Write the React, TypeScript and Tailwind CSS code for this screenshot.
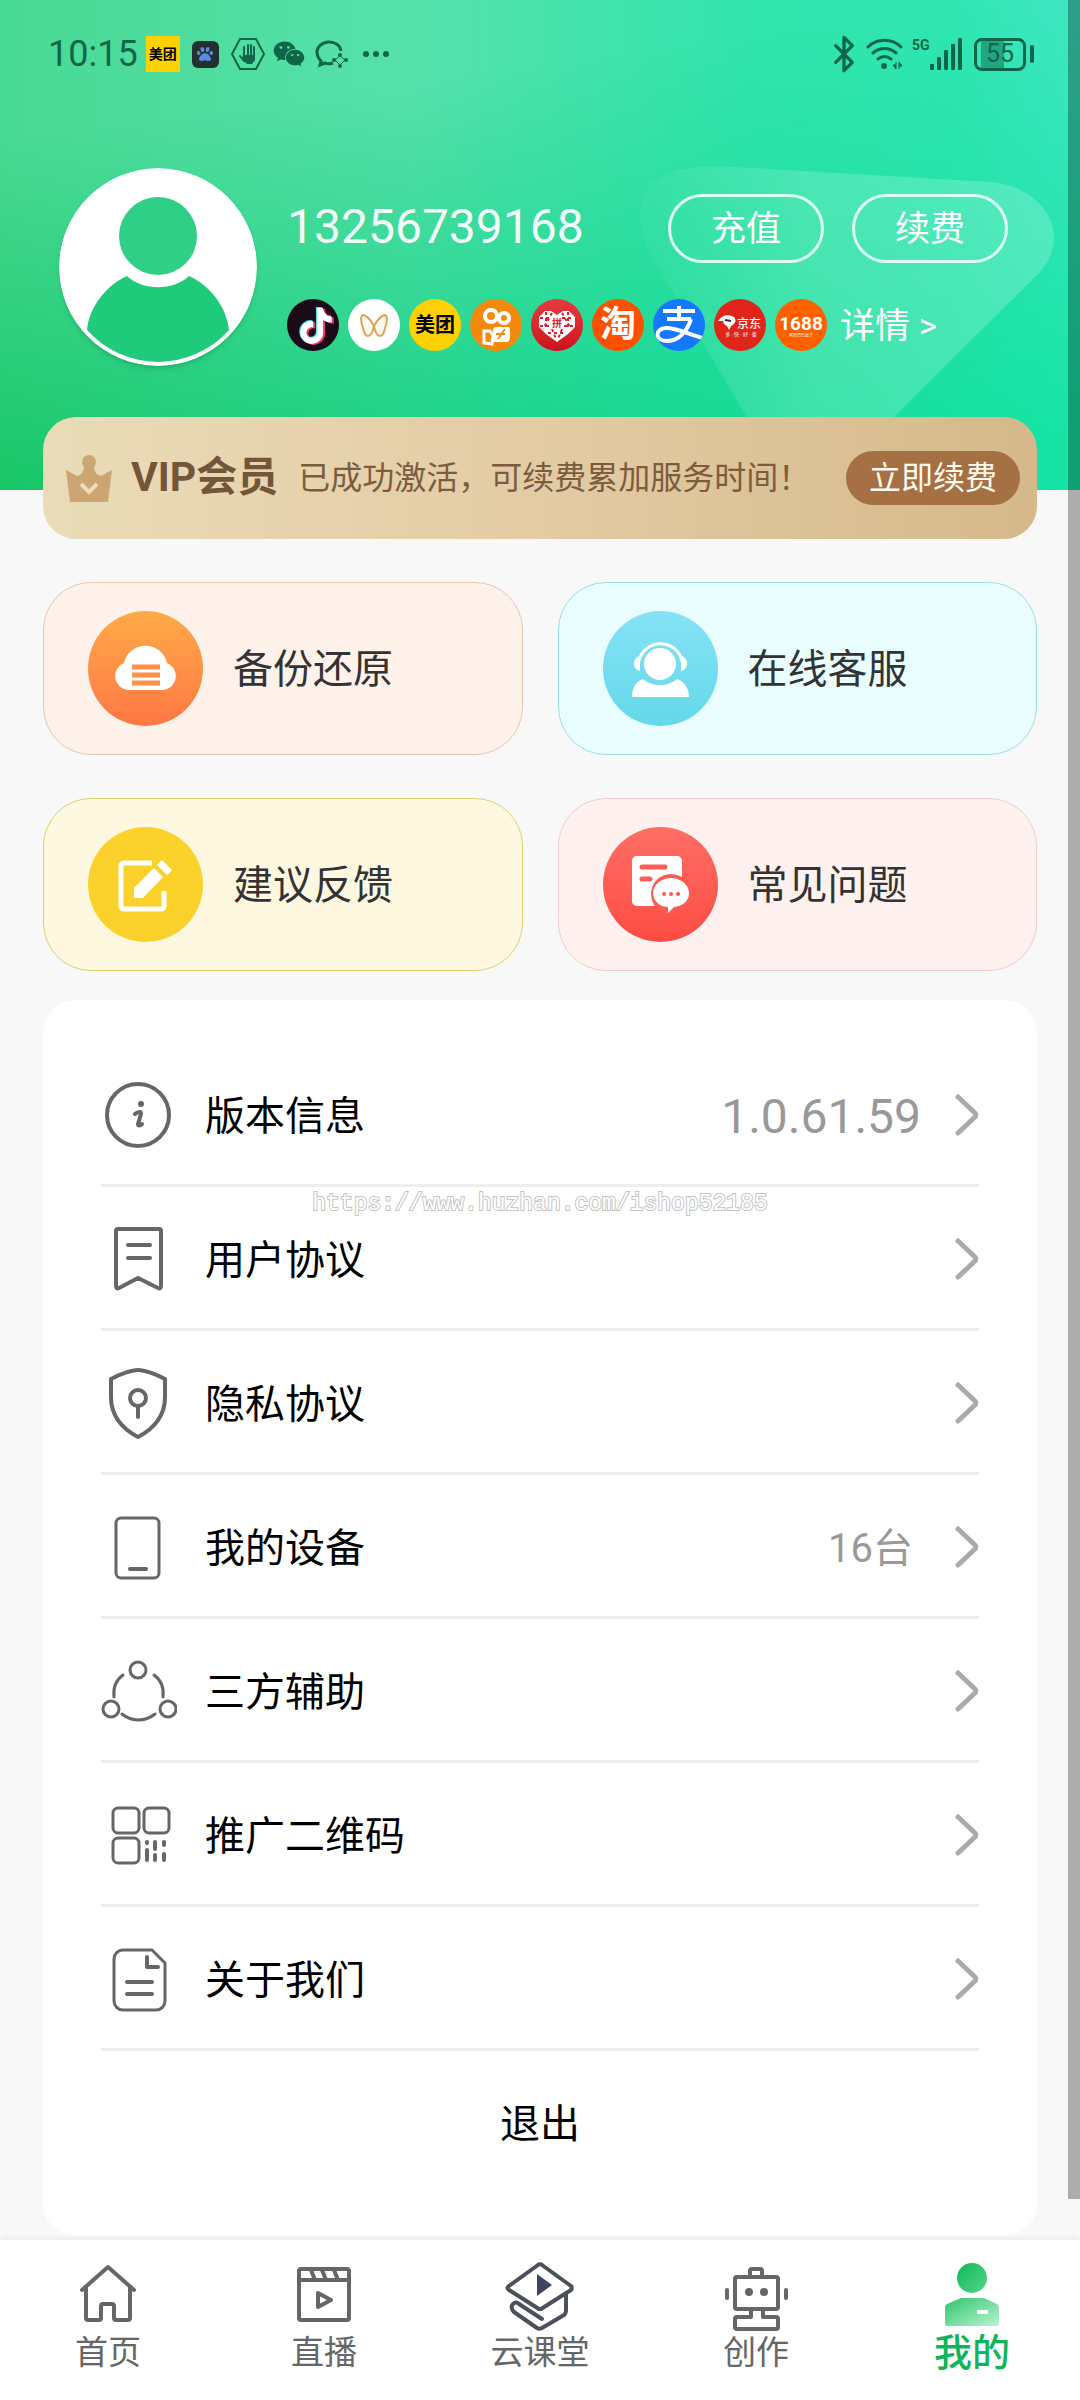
import type { ReactNode } from "react";
import { Bluetooth } from "lucide-react";
import { FaPaw, FaTiktok, FaWeixin } from "react-icons/fa";

const VersionIcon = () => (
  <>
    <circle cx="37" cy="38" r="31" />
    <circle cx="40" cy="27" r="3" stroke="none" fill="#666" />
    <path d="M34 37c2-2 4-2 5-2 1 0 1 1 1 2l-3 10c0 2 2 2 4 0" strokeWidth="4" />
  </>
);

const UserAgreementIcon = () => (
  <>
    <path d="M17 8h41a2 2 0 0 1 2 2v55c0 2-1 3-3 2L37 57 18 67c-2 1-3 0-3-2V10a2 2 0 0 1 2-2Z" />
    <path d="M27 24h22M27 37h22" />
  </>
);

const PrivacyIcon = () => (
  <>
    <path d="M37 5c6 0 18 4 27 9v18c0 18-10 31-27 40C20 63 10 50 10 32V14c9-5 21-9 27-9Z" />
    <circle cx="37" cy="33" r="8" />
    <path d="M37 41v11" />
  </>
);

const DeviceIcon = () => (
  <>
    <rect x="15" y="9" width="43" height="60" rx="5" strokeWidth="3" />
    <path d="M29 60h16" />
  </>
);

const AssistIcon = () => (
  <g strokeWidth="3">
    <circle cx="37" cy="17" r="8" />
    <circle cx="10" cy="56" r="8" />
    <circle cx="67" cy="56" r="8" />
    <path d="M22 22c-7 5-10 13-9 22M53 22c7 5 10 13 9 22M21 61c10 8 23 8 33 0" />
  </g>
);

const QrIcon = () => (
  <g strokeWidth="3">
    <rect x="12" y="11" width="26" height="25" rx="5" />
    <rect x="43" y="11" width="25" height="25" rx="5" />
    <rect x="12" y="41" width="26" height="25" rx="5" />
    <path d="M46 45v1M46 53v10M54 45v7M54 58v5M63 45v3M63 57v6" strokeWidth="4" />
  </g>
);

const AboutIcon = () => (
  <>
    <path d="M22 9h29l13 13v38a9 9 0 0 1-9 9H22a9 9 0 0 1-9-9V18a9 9 0 0 1 9-9Z" strokeWidth="3" />
    <path d="M46 16v10h11M26 41h25M26 53h25" />
  </>
);

const menuItems = [
  { label: "版本信息", icon: VersionIcon, value: "1.0.61.59", valueClass: "text-5xl mr-[34px]" },
  { label: "用户协议", icon: UserAgreementIcon },
  { label: "隐私协议", icon: PrivacyIcon },
  { label: "我的设备", icon: DeviceIcon, value: "16台", valueClass: "text-[40px] mr-[42px]" },
  { label: "三方辅助", icon: AssistIcon },
  { label: "推广二维码", icon: QrIcon },
  { label: "关于我们", icon: AboutIcon },
];

const BackupIcon = () => (
  <>
    <path fill="#fff" d="M40 79a14 14 0 0 1-4-27 22 22 0 0 1 43 0 14 14 0 0 1-4 27Z" />
    <path stroke="#ff914a" strokeWidth="5" d="M44 56h28M44 64h28M44 72h28" />
  </>
);

const SupportIcon = () => (
  <>
    <circle cx="57" cy="53" r="16" fill="#fff" />
    <path d="M36 50a22 22 0 0 1 43 0" fill="none" stroke="#fff" strokeWidth="3" />
    <path d="M37 45c-8 1-8 14 0 15ZM78 45c8 1 8 14 0 15Z" fill="#fff" />
    <path d="M40 68c9 8 25 8 34 0 7 2 12 9 12 18H29c0-9 4-16 11-18Z" fill="#fff" />
  </>
);

const FeedbackIcon = () => (
  <>
    <path
      d="M64 36H36a3 3 0 0 0-3 3v40a3 3 0 0 0 3 3h37a3 3 0 0 0 3-3V64"
      fill="none"
      stroke="#fff"
      strokeWidth="5"
    />
    <path d="M46 71V61l20-20 9 9-20 21ZM69 38l5-5 10 10-5 5Z" fill="#fff" />
  </>
);

const FaqIcon = () => (
  <>
    <path d="M34 29h40a5 5 0 0 1 5 5v45H34a5 5 0 0 1-5-5V34a5 5 0 0 1 5-5Z" fill="#fff" />
    <path d="M39 40h23M39 52h8" stroke="#fd5e55" strokeWidth="5" strokeLinecap="round" />
    <circle cx="68" cy="67" r="20" fill="#fd5b52" />
    <path d="M68 51c10 0 18 7 18 15 0 9-7 13-15 14l-6 6v-6c-8 0-15-6-15-14 0-8 8-15 18-15Z" fill="#fff" />
    <path d="M61 67h.1M68 67h.1M75 67h.1" stroke="#fd5b52" strokeWidth="4" strokeLinecap="round" />
  </>
);

const shortcuts = [
  {
    label: "备份还原",
    icon: BackupIcon,
    card: "border-[#e9c4ae] bg-[#fff2ea]",
    disc: "bg-linear-to-b from-[#ffaa48] to-[#ff7744]",
  },
  {
    label: "在线客服",
    icon: SupportIcon,
    card: "border-[#9adfe4] bg-[#eafdff]",
    disc: "bg-linear-to-b from-[#86e2f7] to-[#62d9e9]",
  },
  {
    label: "建议反馈",
    icon: FeedbackIcon,
    card: "border-[#d9d26a] bg-[#fef8e1]",
    disc: "bg-[#fbd22b]",
  },
  {
    label: "常见问题",
    icon: FaqIcon,
    card: "border-[#f2cccc] bg-[#fef1ef]",
    disc: "bg-linear-to-b from-[#ff6e66] to-[#fc4b42]",
  },
];

const platforms: { name: string; bg: string; logo: ReactNode }[] = [
  {
    name: "抖音",
    bg: "bg-[#1b0a18]",
    logo: (
      <svg viewBox="0 0 52 52" className="size-full">
        <FaTiktok x="10" y="8" size="36" color="#3ee6e6" />
        <FaTiktok x="13" y="10" size="36" color="#f0366a" />
        <FaTiktok x="11" y="9" size="36" color="#fff" />
      </svg>
    ),
  },
  {
    name: "视频号",
    bg: "bg-white",
    logo: (
      <svg viewBox="0 0 52 52" className="size-full" fill="#fffaf0" stroke="#dba559" strokeWidth="2">
        <path d="M26 27C23 21 18 16 15 16c-3 1-2 8 0 13 1 5 3 8 5 8 3 0 5-5 6-10Z" />
        <path d="M26 27c3-6 8-11 11-11 3 1 2 8 0 13-1 5-3 8-5 8-3 0-5-5-6-10Z" />
      </svg>
    ),
  },
  {
    name: "美团",
    bg: "bg-[#ffd100]",
    logo: <span className="text-xl font-bold text-black">美团</span>,
  },
  {
    name: "快手",
    bg: "bg-[#f48a0c]",
    logo: (
      <svg viewBox="0 0 52 52" className="size-full" fill="none" stroke="#fff" strokeWidth="4">
        <circle cx="21" cy="17" r="6" />
        <circle cx="34" cy="19" r="5" />
        <path d="M26 28h12a2 2 0 0 1 2 2v9a4 4 0 0 1-4 4H24l-1-12a3 3 0 0 1 3-3Z" fill="#fff" stroke="none" />
        <path d="M14 32v12l8 1 1-9-3-4Z" strokeWidth="3" />
        <path d="M26 35h9M35 30l-7 10" stroke="#f48a0c" strokeWidth="2" />
      </svg>
    ),
  },
  {
    name: "拼多多",
    bg: "bg-linear-to-b from-[#e53a3f] to-[#cf0f1c]",
    logo: (
      <svg viewBox="0 0 52 52" className="size-full">
        <path d="M26 16l6-4h6l6 6v10l-7 7-11 8-11-8-7-7V18l6-6h6Z" fill="#fff" />
        <path
          d="M9 19h12M31 19h12M9 27h10M33 27h10M15 13v18M37 13v18M21 14l-9 16M31 14l9 16M17 34h18M21 30l4 10M31 30l-4 10"
          stroke="#d9202b"
          strokeWidth="2"
          strokeDasharray="3 3"
        />
        <path d="M26 16l8 8-8 8-8-8Z" fill="#fff" />
        <text x="26" y="28" textAnchor="middle" className="fill-[#df2631] text-[10px] font-bold">
          拼
        </text>
      </svg>
    ),
  },
  {
    name: "淘宝",
    bg: "bg-[#ff5000]",
    logo: <span className="text-[36px] font-bold text-white">淘</span>,
  },
  {
    name: "支付宝",
    bg: "bg-[#1677ff]",
    logo: (
      <svg viewBox="0 0 52 52" className="size-full" fill="none" stroke="#fff" strokeWidth="4">
        <path d="M26 7v12M10 12h32M14 20h24" />
        <path d="M38 20c-4 12-12 22-24 22-13 0-12-13-1-13 12 0 21 6 37 10" />
      </svg>
    ),
  },
  {
    name: "京东",
    bg: "bg-[#e1251b]",
    logo: (
      <svg viewBox="0 0 52 52" className="size-full">
        <path d="M4 22c4-6 10-7 16-4 3 3 1 7-3 9l-2 4-2-4c-3-1-4-4-4-5Z" fill="#fff" />
        <path d="M11 21l6 1" stroke="#333" strokeWidth="2" />
        <text x="23" y="29" className="fill-white text-[12px] font-medium">
          京东
        </text>
        <text x="27" y="37" textAnchor="middle" className="fill-white text-[5px]">
          多 · 快 · 好 · 省
        </text>
      </svg>
    ),
  },
  {
    name: "1688",
    bg: "bg-[#ff6000]",
    logo: (
      <svg viewBox="0 0 52 52" className="size-full">
        <text x="26" y="31" textAnchor="middle" className="fill-white text-[19px] font-bold">
          1688
        </text>
        <text x="26" y="38" textAnchor="middle" className="fill-white text-[4px]">
          阿里巴巴旗下
        </text>
      </svg>
    ),
  },
];

const HomeIcon = () => (
  <>
    <path d="M10 28 36 5l26 23" />
    <path d="M14 25v31a2 2 0 0 0 2 2h11a2 2 0 0 0 2-2V44a2 2 0 0 1 2-2h9a2 2 0 0 1 2 2v12a2 2 0 0 0 2 2h12a2 2 0 0 0 2-2V25" />
  </>
);

const LiveIcon = () => (
  <>
    <rect x="11" y="7" width="50" height="51" rx="2" />
    <path d="M11 18h50M23 8l4 10M34 8l4 10M46 8l4 10" />
    <path d="M30 31v14l13-7Z" />
  </>
);

const CourseIcon = () => (
  <g stroke="#4c505b">
    <path d="M34 3c1-1 3-1 4 0l29 21c1 1 1 3 0 4L37 47h-2L5 28c-2-1-2-3 0-4Z" />
    <path d="M62 32v17c0 2-1 3-2 4L38 66c-2 1-3 1-5 0L10 50c-3-3-3-6-1-8s4-2 6 0l23 15" />
    <path d="M33 12v22l15-11Z" fill="#3e4562" stroke="none" />
  </g>
);

const CreateIcon = () => (
  <>
    <path d="M30 14V9a2 2 0 0 1 2-2h8a2 2 0 0 1 2 2v5" />
    <rect x="15" y="15" width="43" height="32" rx="2" />
    <circle cx="29" cy="30" r="4" fill="#666" stroke="none" />
    <circle cx="44" cy="30" r="4" fill="#666" stroke="none" />
    <path d="M7 28v8M66 28v8" />
    <path d="M31 47v8H17a2 2 0 0 0-2 2v8a2 2 0 0 0 2 2h39a2 2 0 0 0 2-2v-8a2 2 0 0 0-2-2H43v-8" />
  </>
);

const MineIcon = () => (
  <g stroke="none">
    <defs>
      <linearGradient id="mine" x1="0" y1="0" x2="1" y2="1">
        <stop offset="0" stopColor="#0fb854" />
        <stop offset="1" stopColor="#57d68c" />
      </linearGradient>
      <linearGradient id="mine-body" x1="0" y1="0" x2="1" y2="1">
        <stop offset="0" stopColor="#2fc56d" />
        <stop offset="1" stopColor="#b9f3d2" />
      </linearGradient>
    </defs>
    <circle cx="36" cy="16" r="15" fill="url(#mine)" />
    <path d="M25 36h23l13 6c1 1 2 2 2 4v16a2 2 0 0 1-2 2H11a2 2 0 0 1-2-2V46c0-2 0-3 2-4Z" fill="url(#mine-body)" />
    <rect x="41" y="48" width="11" height="4" rx="1" fill="#fff" />
  </g>
);

const tabs = [
  { label: "首页", icon: HomeIcon },
  { label: "直播", icon: LiveIcon },
  { label: "云课堂", icon: CourseIcon },
  { label: "创作", icon: CreateIcon },
  { label: "我的", icon: MineIcon, active: true },
];

function StatusBar() {
  return (
    <div className="relative flex h-[108px] items-center justify-between pr-[46px] pl-12 text-[#0d6647]">
      <div className="flex items-center">
        <span className="text-[36px]">10:15</span>
        <span className="ml-2 flex h-9 w-[34px] items-center justify-center bg-[#ffd100] text-[14px] font-bold text-black">
          美团
        </span>
        <span className="ml-3 flex size-[27px] items-center justify-center rounded-md bg-[#22302f]">
          <FaPaw size={16} color="#5a8ae0" />
        </span>
        <svg viewBox="0 0 34 34" className="ml-3 size-[34px]" fill="none" stroke="currentColor" strokeWidth="2">
          <path d="M9 2h16l8 15-8 15H9L1 17Z" />
          <path d="M13 19V10M17 19V8M20 19V8M23 20V10M9 19l4 5" strokeLinecap="round" />
          <path d="M12 18h12v5l-3 4h-5l-5-5Z" fill="currentColor" stroke="none" />
        </svg>
        <FaWeixin size={32} className="ml-2" />
        <svg
          viewBox="0 0 34 30"
          className="ml-[10px] h-[30px] w-[34px]"
          fill="none"
          stroke="currentColor"
          strokeWidth="3"
        >
          <path d="M26 12C25 6 20 3 14 3 7 3 2 8 2 13c0 5 2 7 4 9l-1 4 5-2c2 1 5 1 8 0" />
          <path d="M25 17l5 4-5 5-5-5Z" strokeWidth="1" />
          <path d="M25 16v.1M31 21h.1M25 27v.1M19 21h.1" strokeLinecap="round" strokeWidth="4" />
        </svg>
        <svg viewBox="0 0 26 6" className="ml-[14px] h-[6px] w-[26px]" fill="currentColor">
          <circle cx="3" cy="3" r="3" />
          <circle cx="13" cy="3" r="3" />
          <circle cx="23" cy="3" r="3" />
        </svg>
      </div>
      <div className="flex items-center">
        <Bluetooth size={40} strokeWidth={2} />
        <svg viewBox="0 0 38 34" className="ml-0.5 h-[34px] w-[38px]" fill="none" stroke="currentColor" strokeWidth="3">
          <path d="M2 10c9-9 24-9 33 0M7 16c7-6 16-6 23 0M12 22c4-3 9-3 13 0" strokeLinecap="round" />
          <circle cx="18" cy="29" r="3" fill="currentColor" stroke="none" />
          <path d="M30 25v7l-3-4h3M33 32v-7l3 4h-3" strokeWidth="1" fill="currentColor" />
        </svg>
        <span className="ml-2 flex h-[34px] w-[50px] items-start">
          <span className="w-[18px] text-[14px] leading-4 font-bold">5G</span>
          <svg viewBox="0 0 32 34" className="h-[34px] w-8" fill="currentColor">
            <rect x="0" y="27" width="4" height="6" rx="1" />
            <rect x="7" y="20" width="4" height="13" rx="1" />
            <rect x="14" y="13" width="4" height="20" rx="1" />
            <rect x="21" y="7" width="4" height="26" rx="1" />
            <rect x="28" y="1" width="4" height="32" rx="1" />
          </svg>
        </span>
        <span className="ml-3 flex h-[33px] w-[52px] items-center justify-center rounded-lg border-3 border-current bg-[linear-gradient(90deg,transparent_8%,#22a583_8%,#22a583_58%,transparent_58%)] text-[25px]">
          55
        </span>
        <span className="ml-1 h-[18px] w-1 rounded-full bg-current" />
      </div>
    </div>
  );
}

function Profile() {
  return (
    <div className="relative mt-15 flex items-start gap-[30px] pr-[72px] pl-[59px]">
      <svg viewBox="0 0 198 198" className="size-[198px] shrink-0 rounded-full shadow-md">
        <circle cx="99" cy="99" r="99" fill="#fff" />
        <circle cx="99" cy="68" r="39" fill="#2fcf87" />
        <path
          d="M68 108c16 15 46 15 62 0 22 10 38 32 40 54a95 95 0 0 1-142 0c2-22 18-44 40-54Z"
          fill="#1fcb7b"
        />
      </svg>
      <div className="min-w-0 flex-1 pt-[26px]">
        <div className="flex h-[69px] items-center gap-7">
          <span className="mr-auto pb-1 text-5xl text-white/95">13256739168</span>
          <button className="h-[69px] w-[156px] rounded-full border-3 border-[#dcfff2] pt-1 text-[35px] text-white">
            充值
          </button>
          <button className="h-[69px] w-[156px] rounded-full border-3 border-[#dcfff2] pt-1 text-[35px] text-white">
            续费
          </button>
        </div>
        <div className="mt-9 flex items-center gap-[9px]">
          {platforms.map((platform) => (
            <span
              key={platform.name}
              className={`flex size-[52px] shrink-0 items-center justify-center overflow-hidden rounded-full leading-none ${platform.bg}`}
            >
              {platform.logo}
            </span>
          ))}
          <a href="#detail" className="ml-1 pt-1 text-[35px] leading-[48px] whitespace-nowrap text-white">
            详情 &gt;
          </a>
        </div>
      </div>
    </div>
  );
}

function VipBanner() {
  return (
    <section className="relative mx-[43px] -mt-[73px] flex h-[122px] items-center rounded-[33px] bg-linear-to-r from-[#eadcb8] via-[#e3cba4] to-[#d5b98a] pr-[17px] pl-[23px]">
      <svg viewBox="0 0 46 48" className="h-12 w-[46px]">
        <circle cx="23" cy="8" r="7" fill="#cba672" />
        <path d="M0 16l11 6c5-1 7-5 7-10h10c0 5 2 9 7 10l11-6-4 32H4Z" fill="#cba672" />
        <path d="M15 30l8 8 8-8" fill="none" stroke="#eedbb7" strokeWidth="4" />
      </svg>
      <h2 className="ml-[19px] text-[41px] font-bold whitespace-nowrap text-[#73553a]">VIP会员</h2>
      <p className="ml-5 text-[32px] whitespace-nowrap text-[#7c5c3f]">已成功激活，可续费累加服务时间！</p>
      <button className="ml-auto h-[54px] w-[174px] shrink-0 rounded-full bg-[#a57144] text-[32px] text-[#fffaf0]">
        立即续费
      </button>
    </section>
  );
}

export default function App() {
  return (
    <div className="relative flex min-h-screen flex-col bg-[#f8f8f9] font-['Roboto','Noto_Sans_CJK_SC',sans-serif]">
      <header className="relative h-[490px] bg-[linear-gradient(90deg,#48d993,#56e1ac_38%,#31e5ad_70%,#31e6b2_88%,#42e7c5)]">
        <div className="absolute inset-0 bg-[linear-gradient(90deg,#0bc15b,#12d288_50%,#15e4a5)] [mask-image:linear-gradient(172deg,transparent_22%,black_92%)]" />
        <svg viewBox="0 0 440 330" className="absolute top-[160px] right-0 h-[330px] w-[440px]">
          <defs>
            <linearGradient id="glow" x1="0" y1="0" x2="1" y2="0">
              <stop offset="0" stopColor="#fff" stopOpacity="0.03" />
              <stop offset="0.4" stopColor="#fff" stopOpacity="0.17" />
              <stop offset="1" stopColor="#fff" stopOpacity="0.2" />
            </linearGradient>
          </defs>
          <path
            d="M50 8c20-3 50-1 80 1l220 13c50 3 85 50 50 90L255 256c-20 20-45 40-75 40-40 0-60-15-80-50L8 90C-10 40 5 14 50 8Z"
            fill="url(#glow)"
          />
        </svg>
        <StatusBar />
        <Profile />
      </header>

      <VipBanner />

      <section className="mx-[43px] mt-[43px] grid grid-cols-2 gap-x-[35px] gap-y-[43px]">
        {shortcuts.map((item) => (
          <button
            key={item.label}
            className={`flex h-[173px] items-center gap-[30px] rounded-[48px] border pl-[44px] text-[40px] text-[#333] ${item.card}`}
          >
            <svg viewBox="0 0 115 115" className={`size-[115px] rounded-full ${item.disc}`}>
              <item.icon />
            </svg>
            <span className="pt-0.5">{item.label}</span>
          </button>
        ))}
      </section>

      <main className="mx-[43px] mt-[29px] mb-0.5 rounded-[33px] bg-white px-[58px] pt-[43px] pb-[41px]">
        {menuItems.map((item) => (
          <button
            key={item.label}
            className="flex h-36 w-full items-center border-b-3 border-[#eee] pt-0.5 text-left text-[40px] text-black"
          >
            <svg
              viewBox="0 0 76 76"
              className="mr-7 size-[76px]"
              fill="none"
              stroke="#666"
              strokeWidth="4"
              strokeLinecap="round"
              strokeLinejoin="round"
            >
              <item.icon />
            </svg>
            <span className="pt-1">{item.label}</span>
            <span className={`ml-auto pt-1 text-[#999] ${item.valueClass ?? ""}`}>{item.value}</span>
            <svg
              viewBox="0 0 24 42"
              className="h-[42px] w-6"
              fill="none"
              stroke="#aaa"
              strokeWidth="5"
              strokeLinecap="round"
              strokeLinejoin="round"
            >
              <path d="M3 3l17 16c1 1 1 3 0 4L3 39" />
            </svg>
          </button>
        ))}
        <button className="h-36 w-full pt-1 text-[40px] text-black">退出</button>
      </main>

      <nav className="mt-auto grid h-40 grid-cols-5 bg-white shadow-[0_-2px_6px_rgba(0,0,0,0.06)]">
        {tabs.map((tab) => (
          <a key={tab.label} href="#tab" className="flex flex-col items-center pt-[22px]">
            <svg
              viewBox="0 0 72 72"
              className="size-[72px] overflow-visible"
              fill="none"
              stroke="#666"
              strokeWidth="4"
              strokeLinecap="round"
              strokeLinejoin="round"
            >
              <tab.icon />
            </svg>
            <span
              className={
                tab.active
                  ? "text-[38px] leading-[38px] font-medium text-[#10b45a]"
                  : "text-[33px] leading-[38px] text-[#666]"
              }
            >
              {tab.label}
            </span>
          </a>
        ))}
      </nav>

      <p className="pointer-events-none absolute inset-x-0 top-[1188px] text-center font-['Liberation_Mono',monospace] text-[23px] leading-8 text-white [paint-order:stroke] [-webkit-text-stroke:2px_#c4c4c4]">
        https://www.huzhan.com/ishop52185
      </p>
      <div className="pointer-events-none absolute top-0 right-0 h-[2199px] w-3 bg-black/30" />
    </div>
  );
}
